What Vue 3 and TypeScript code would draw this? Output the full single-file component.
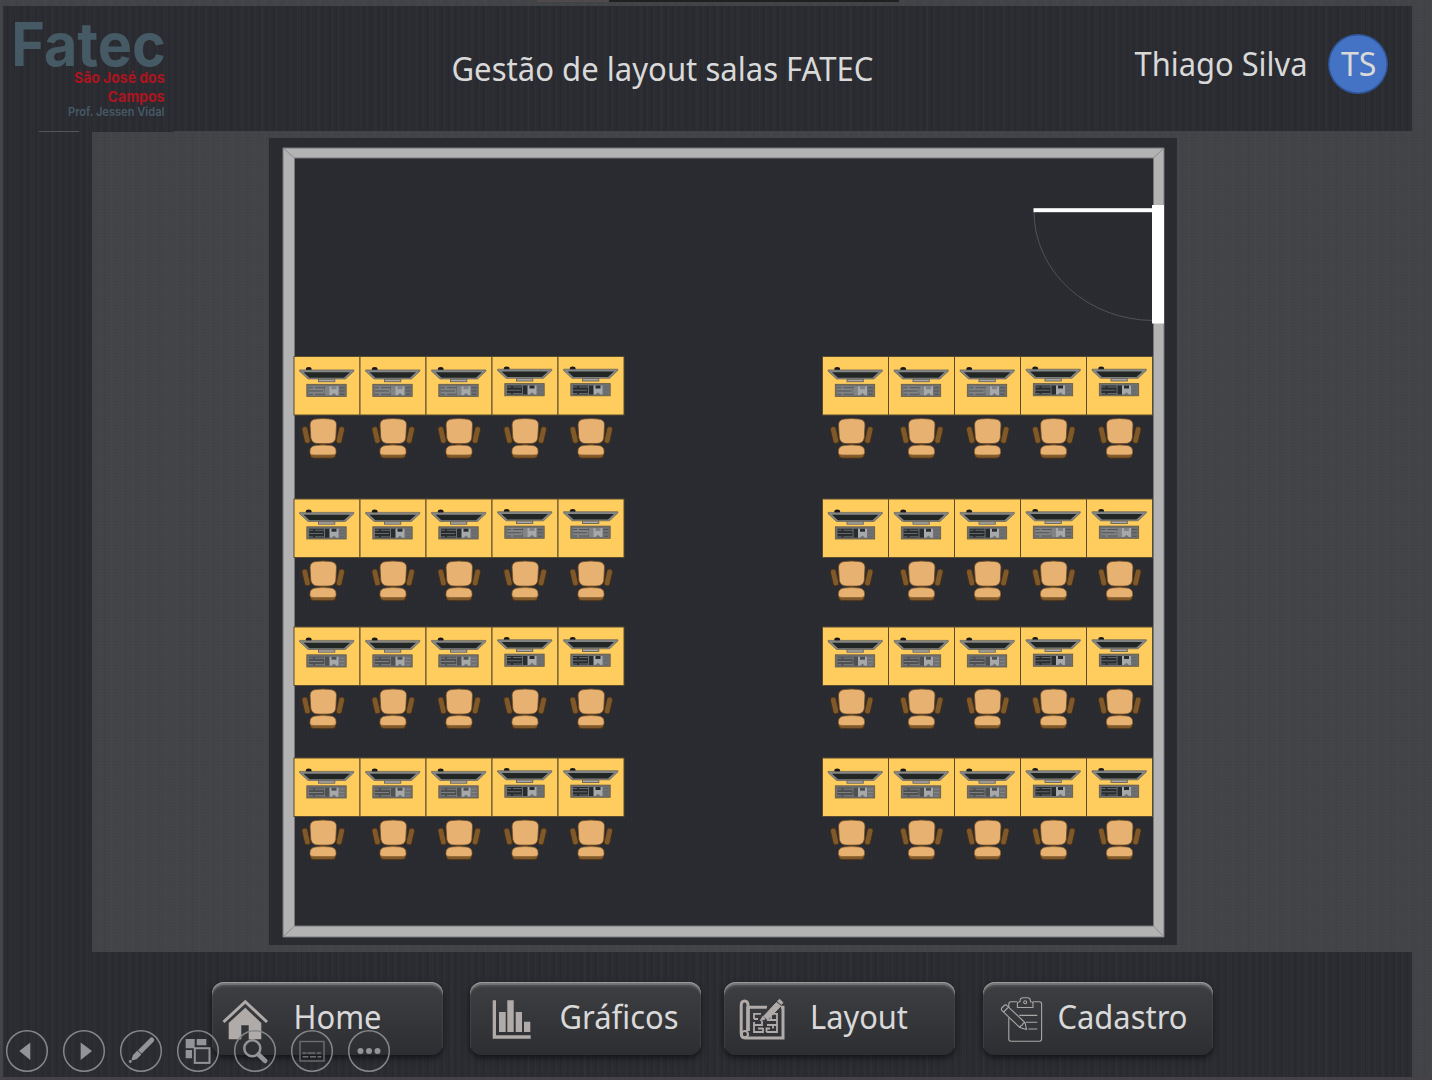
<script setup lang="ts">
interface Seat {
  x: number
  y: number
  chairX: number
  lift: number
  tone: 'dark' | 'mid' | 'light'
}

const rowTops = [356.5, 499, 627, 758]
const blockLefts = [294, 822.5]
const tones: Seat['tone'][][] = [
  ['light', 'light', 'light', 'dark', 'dark'],
  ['dark', 'dark', 'dark', 'light', 'light'],
  ['mid', 'mid', 'mid', 'dark', 'dark'],
  ['mid', 'mid', 'mid', 'dark', 'dark'],
]

const seats: Seat[] = rowTops.flatMap((y, row) =>
  blockLefts.flatMap((left) =>
    [0, 1, 2, 3, 4].map((col) => ({
      x: left + col * 66,
      y,
      chairX: left + col * 66 + (col === 0 ? 29 : 33),
      lift: col > 2 ? -0.5 : 0.2,
      tone: tones[row][col],
    })),
  ),
)

const buttons = [
  { id: 'home', label: 'Home', x: 81.5, w: 88, width: 231 },
  { id: 'charts', label: 'Gráficos', x: 89.5, w: 119, width: 231 },
  { id: 'layout', label: 'Layout', x: 86, w: 98, width: 231 },
  { id: 'register', label: 'Cadastro', x: 74.5, w: 130, width: 230 },
]

const controls = ['prev', 'next', 'pen', 'slides', 'search', 'captions', 'more']
</script>

<template>
  <div class="page">
    <div class="strip"><i class="warm"></i><i class="black"></i></div>
    <header class="header ribbed">
      <svg class="logo ribbed" width="171" height="126" viewBox="3 6 171 126">
        <g font-family="Inter, sans-serif">
          <text x="11.3" y="65.8" font-size="60.5" font-weight="700" fill="#455a65" textLength="154.5" lengthAdjust="spacingAndGlyphs">Fatec</text>
          <g font-weight="700" fill="#ad1420" font-size="15">
            <text x="74" y="83.3" textLength="90.5" lengthAdjust="spacingAndGlyphs">São José dos</text>
            <text x="107.5" y="102" textLength="57" lengthAdjust="spacingAndGlyphs">Campos</text>
          </g>
          <text x="68" y="116.3" font-size="12.3" font-weight="600" fill="#455a65" textLength="96.5" lengthAdjust="spacingAndGlyphs">Prof. Jessen Vidal</text>
        </g>
      </svg>
      <svg class="title" width="440" height="60" viewBox="440 40 440 60">
        <text x="451.5" y="80.7" textLength="422" lengthAdjust="spacingAndGlyphs">Gestão de layout salas FATEC</text>
      </svg>
      <svg class="user" width="280" height="72" viewBox="1120 28 280 72">
        <text x="1134.5" y="76" textLength="173" lengthAdjust="spacingAndGlyphs">Thiago Silva</text>
        <circle cx="1358" cy="64" r="29.2" fill="#4472c4" stroke="#2f5597" stroke-width="1.5" />
        <text x="1341" y="76" textLength="35.5" lengthAdjust="spacingAndGlyphs">TS</text>
      </svg>
    </header>

    <main class="body">
      <aside class="side"><i></i></aside>
      <svg class="room" width="908" height="807" viewBox="269 138 908 807">
        <defs>
          <g id="chair">
            <g fill="#80592b" stroke="#412c15" stroke-width=".8">
              <rect x="-2.9" y="-8" width="5.8" height="17" rx="2.5" transform="translate(-17 16.5) rotate(-13)" />
              <rect x="-2.9" y="-8" width="5.8" height="17" rx="2.5" transform="translate(17.5 16.5) rotate(13)" />
              <rect x="-13" y="29" width="26" height="11.2" rx="4" />
            </g>
            <path d="M-3 25.5h6v3h-6z" fill="#563b1b" />
            <path d="M-13 7Q-13 1.5 -7 1Q0 0 7 1Q13.7 1.5 13.5 7L12.8 20Q12 25.5 5 25.6H-5Q-11 25.5 -12.2 20Z" fill="#e7b171" stroke="#6e4a24" stroke-width=".8" />
            <path d="M-13 33Q-13 28 -7 27.5Q0 26.7 7 27.5Q13 28 13 33V35.5Q12 37 9 37H-9Q-12 37 -13 35.5Z" fill="#e7b171" stroke="#8d6232" stroke-width=".7" />
          </g>
          <g id="screen">
            <ellipse cx="14.7" cy="12.4" rx="2.9" ry="2" fill="#171717" />
            <path d="M5.6 13.2H59.8V14.6L51.5 22.3H14L5.6 14.6Z" fill="#858786" stroke="#555" stroke-width=".6" />
            <path d="M9.5 15.5H56L50 21H15.4Z" fill="#222625" />
            <rect x="24.5" y="22.6" width="16.3" height="2.4" fill="#aaa" stroke="#68635b" stroke-width=".9" />
          </g>
        </defs>
        <g fill="#b3b3b3">
          <path fill-rule="evenodd" d="M283 148H1164V937H283ZM294.5 158V926H1153.5V158Z" stroke="#77777a" />
          <path d="M283 148L294.5 158M1164 148L1153.5 158M283 937L294.5 926M1164 937L1153.5 926" stroke="#8c8c8e" />
        </g>
        <path d="M1034 212A120 109 0 0 0 1153 320.5" fill="none" stroke="#515255" />
        <rect x="1033.5" y="208.2" width="120" height="4" fill="#fff" />
        <rect x="1152" y="205" width="12" height="118.5" fill="#fff" />
        <g v-for="(seat, i) in seats" :key="i">
          <g :transform="`translate(${seat.x} ${seat.y})`">
            <rect width="66" height="58.5" fill="#ffcd5e" stroke="#594b2e" stroke-width="1" />
            <g :transform="`translate(0 ${seat.lift})`">
              <use href="#screen" />
              <g :class="['keys', seat.tone]">
                <rect class="case" x="12.8" y="27.6" width="39.4" height="12.2" />
                <rect class="block" x="15" y="29.5" width="15" height="9" />
                <path class="slots" d="M15 31h4m2 0h13M15 34.3h14M15 37.5h4m2 0h13" />
                <rect class="block" x="31" y="29.5" width="5" height="9" />
                <path d="M35.5 29.5h9v9h-2.2l-2.3-2.3-2.5 2.3h-2z" fill="#a6a8aa" />
                <path d="M37.5 29.5h5v3h-5z" class="block" />
                <path class="slots" d="M45.5 31h5M45.5 34.3h5M46 37.7h4" />
              </g>
            </g>
          </g>
          <use href="#chair" :transform="`translate(${seat.chairX} ${seat.y + 61.5})`" />
        </g>
      </svg>
    </main>

    <footer class="footer ribbed">
      <button v-for="b in buttons" :key="b.id" :class="['nav', b.id]" :style="{ width: b.width + 'px' }">
        <svg :width="b.width" height="73" :viewBox="`0 0 ${b.width} 73`">
          <g v-if="b.id === 'home'" fill="#b0aba9">
            <path d="M11.5 40L33.3 19.7L55 40" fill="none" stroke="#b0aba9" stroke-width="3" />
            <path d="M16.7 41L33.3 25.7L49.3 41V57.3H36.7V43.3H29.3V57.3H16.7Z" />
          </g>
          <g v-else-if="b.id === 'charts'" fill="#b0aba9">
            <path d="M22.7 18.3H26V53.3H60.7V56.7H22.7Z" />
            <path d="M29 30h6.7v20H29zM37.3 18.3h6.4V50h-6.4zM45.7 30H52v20h-6.3zM54 39.7h6.3V50H54z" />
          </g>
          <g v-else-if="b.id === 'layout'" fill="none" stroke="#b0aba9">
            <path d="M25.3 25.3H43M57 25.3H59V56H21C18 56 17.2 54 17.2 51V23.5C17.2 17.5 24 17.5 24 23.5V49" stroke-width="3" />
            <path d="M24 25V49" stroke-width="3.5" />
            <circle cx="20.8" cy="52.2" r="3.2" stroke-width="2.2" />
            <path d="M37 31.8H30V37M30 40V50H39V46M30 37H34M30 43H38V39M34 46.5H39M42.5 50H53V31.8H49M53 38H42M47 38V34M43 43H49V46.5M53 43H49M42.5 50V46.5H46" stroke-width="1.8" />
            <path d="M37.5 38.2L55.5 18.8" stroke="#37383b" stroke-width="8.5" />
            <path d="M39.7 34.2L52.4 20.5L56.8 24L43.6 37.8Z" fill="#b0aba9" />
            <path d="M39 34.3L36.2 38.7L40.8 37.2ZM53.5 19.2L55.5 17.2L59 20.6L57.3 22.5Z" fill="#b0aba9" stroke-width="1" />
          </g>
          <g v-else fill="none" stroke="#aaa8a7" stroke-width="1.1">
            <path d="M34 19.7H28Q25.8 19.7 25.8 22V25M25.8 36V57Q25.8 59.2 28 59.2H56.5Q58.6 59.2 58.6 57V22Q58.6 19.7 56.5 19.7H50" />
            <path d="M34.4 25.5V21.5Q34.4 19.7 37 19.7Q37 15.8 40 15.8H44.5Q47.5 15.8 47.5 19.7Q50 19.7 50 21.5V25.5Z" />
            <circle cx="42.2" cy="20.3" r="1.5" />
            <path d="M18.7 26L21.8 23Q23 22.5 24.2 23.8L42 40.5L43.5 47.5L36.8 45.5L19 28.7Q18 27.5 18.7 26ZM20.7 30L25.5 25M36.8 45.5L38 43.4L39.5 43L40 41.5L42 40.5M36.3 33.4H54.3M43 40.3H54.3M45.3 47H54.3" />
          </g>
          <text :x="b.x" y="47" :textLength="b.w" lengthAdjust="spacingAndGlyphs">{{ b.label }}</text>
        </svg>
      </button>
    </footer>

    <nav class="controls">
      <svg v-for="c in controls" :key="c" width="44" height="44" viewBox="-22 -22 44 44">
        <circle r="20.3" fill="none" stroke="#85868a" stroke-width="1.5" />
        <path v-if="c === 'prev'" d="M-7.7 0L3.3-8.5V9Z" />
        <path v-else-if="c === 'next'" d="M-3.3-8.5L8 0L-3.3 9Z" />
        <g v-else-if="c === 'pen'">
          <path d="M-1.5 1.2L10.7-11" stroke="#939497" stroke-width="5" stroke-linecap="round" />
          <path d="M-3.8-.3L.2 3.8L-4.2 8L-8.5 9.5L-9.5 8.5L-8 4Z" />
          <circle cx="-10.7" cy="10.5" r="1.4" />
          <path d="M-3.5-.8L1 3.5" stroke="#303136" />
        </g>
        <g v-else-if="c === 'slides'">
          <path d="M-12.3-12h9v9.3h-9zM-1.3-12h9.6v6.3h-9.6zM-12.3-1H-6v8.3h-6.3z" />
          <rect x="-3.2" y="-2.8" width="14.7" height="14.7" fill="#303136" stroke="#939497" stroke-width="2" />
        </g>
        <g v-else-if="c === 'search'" fill="none" stroke="#939497">
          <circle cx="-2.7" cy="-2.7" r="8" stroke-width="2.5" />
          <path d="M3.5 3.5L10.3 10" stroke-width="4.5" stroke-linecap="round" />
        </g>
        <g v-else-if="c === 'captions'" fill="none" stroke="#6d6e71" stroke-width="1.4">
          <rect x="-12" y="-9.5" width="24" height="19.5" />
          <path d="M-9.5 2h4m1 0h8m1.5 0h4M-9.5 5.7h6m1.5 0h6m1.5 0h4" />
        </g>
        <g v-else><circle cx="-8.5" r="3" /><circle r="3" /><circle cx="8.5" r="3" /></g>
      </svg>
    </nav>
  </div>
</template>

<style>
body {
  background: #434448;
}
</style>

<style scoped>
.page {
  position: relative;
  box-sizing: border-box;
  width: 1432px;
  height: 1080px;
  padding-left: 3px;
  overflow: hidden;
  background:
    repeating-linear-gradient(90deg, rgba(255, 255, 255, 0.01) 0 2px, transparent 2px 5px, rgba(0, 0, 0, 0.025) 5px 6px, transparent 6px 11px),
    repeating-linear-gradient(0deg, rgba(0, 0, 0, 0.025) 0 1px, transparent 1px 3px),
    #434448;
}
.ribbed,
.side {
  background:
    repeating-linear-gradient(90deg, rgba(255, 255, 255, 0.018) 0 1px, transparent 1px 4px, rgba(0, 0, 0, 0.07) 4px 5px, transparent 5px 7px),
    repeating-linear-gradient(90deg, transparent 0 11px, rgba(255, 255, 255, 0.012) 11px 13px, transparent 13px 19px),
    #2b2c31;
}
.strip {
  display: flex;
  height: 6px;
  padding-left: 534px;
}
.strip i {
  height: 2px;
}
.warm {
  width: 72px;
  background: #504a4a;
}
.black {
  width: 290px;
  background: #20201f;
}
.header {
  display: flex;
  align-items: flex-start;
  width: 1409px;
  height: 125px;
}
svg {
  display: block;
  flex: none;
}
.title {
  margin: 34px 0 0 266px;
}
.user {
  margin: 22px 0 0 240px;
}
.title text,
.user text,
.nav text {
  font-family: "Noto Sans", "Open Sans", sans-serif;
  font-size: 32px;
  fill: #d9d9d9;
}
.body {
  display: flex;
  height: 821px;
}
.side {
  width: 89px;
}
.side i {
  display: block;
  width: 40px;
  height: 1px;
  margin-left: 36px;
  background: #55565a;
}
.room {
  margin: 7px 0 0 177px;
  background:
    repeating-linear-gradient(90deg, rgba(0, 0, 0, 0.06) 0 1px, transparent 1px 4px),
    #2b2c31;
}
.case {
  fill: #6e7072;
  stroke: #655a42;
  stroke-width: 0.8px;
}
.block {
  fill: #292c2e;
}
.slots {
  fill: none;
  stroke: #535658;
  stroke-width: 1.1px;
}
.light .block {
  fill: #818385;
}
.mid .block {
  fill: #4e5052;
}
.dark .slots {
  stroke: #65686a;
}
.mid .slots {
  stroke: #8a8c8e;
  stroke-width: 0.8px;
}
.footer {
  display: flex;
  box-sizing: border-box;
  width: 1409px;
  height: 125px;
  padding: 30px 0 0 209px;
}
.page::after {
  content: "";
  display: block;
  height: 3px;
  margin-left: -3px;
  background: #454248;
}
.nav {
  flex: none;
  height: 73px;
  padding: 0;
  border: 0;
  border-radius: 12px;
  background: linear-gradient(#3e3f42, #2d2e31);
  box-shadow:
    inset 0 1px 0 #9a9a9b,
    inset 0 3px 1px #747577,
    inset 0 5px 2px #4c4d50,
    0 3px 6px rgba(0, 0, 0, 0.55);
}
.charts {
  margin-left: 27px;
}
.layout {
  margin-left: 23px;
}
.register {
  margin-left: 28px;
}
.controls {
  position: absolute;
  left: 4.5px;
  top: 1029.3px;
  display: flex;
  gap: 13px;
  fill: #939497;
}
</style>
